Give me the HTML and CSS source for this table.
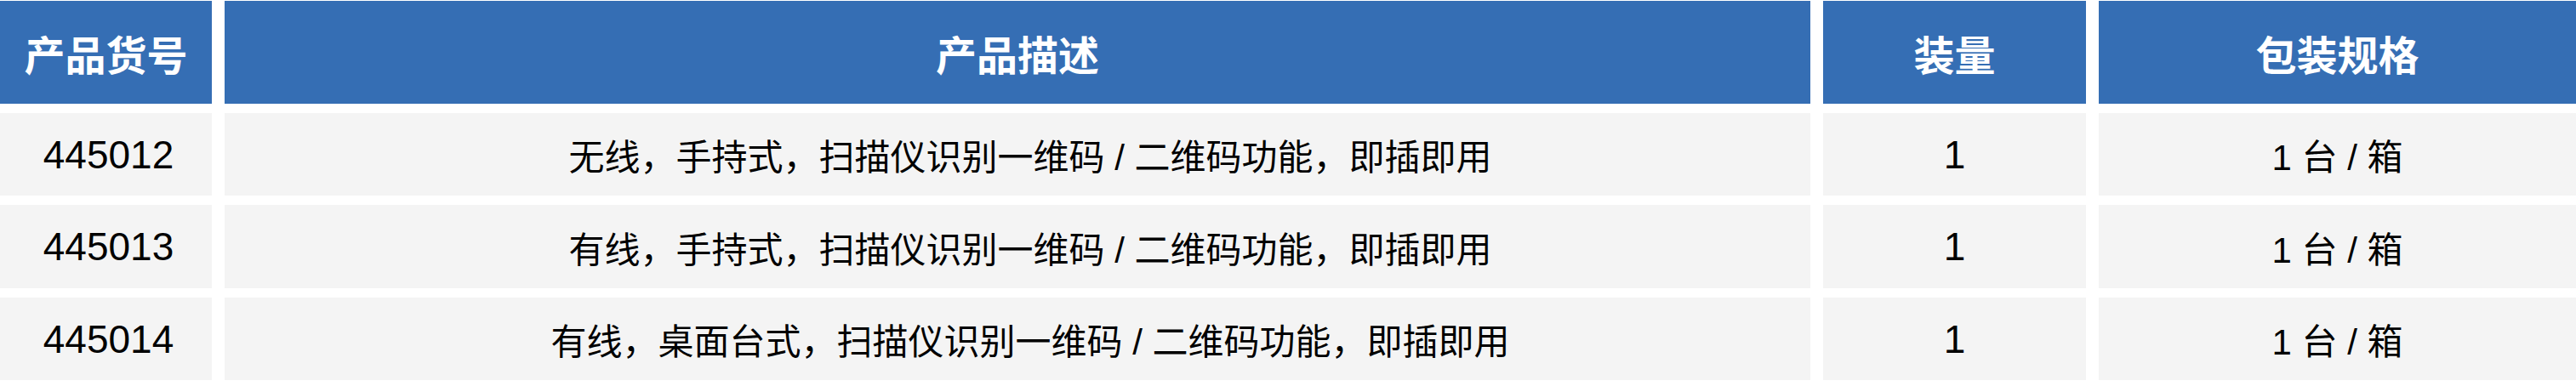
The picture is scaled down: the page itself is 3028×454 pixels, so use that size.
FILE: index.html
```html
<!DOCTYPE html>
<html lang="zh-CN">
<head>
<meta charset="utf-8">
<title>产品列表</title>
<link rel="stylesheet" href="styles.css">
</head>
<body>
<div class="table">
  <div class="cell head">产品货号</div>
  <div class="cell head">产品描述</div>
  <div class="cell head">装量</div>
  <div class="cell head">包装规格</div>

  <div class="cell code">445012</div>
  <div class="cell desc">无线，手持式，扫描仪识别一维码 / 二维码功能，即插即用</div>
  <div class="cell qty">1</div>
  <div class="cell pack">1 台 / 箱</div>

  <div class="cell code">445013</div>
  <div class="cell desc">有线，手持式，扫描仪识别一维码 / 二维码功能，即插即用</div>
  <div class="cell qty">1</div>
  <div class="cell pack">1 台 / 箱</div>

  <div class="cell code">445014</div>
  <div class="cell desc">有线，桌面台式，扫描仪识别一维码 / 二维码功能，即插即用</div>
  <div class="cell qty">1</div>
  <div class="cell pack">1 台 / 箱</div>
</div>
</body>
</html>
```

FILE: styles.css
```css
html, body {
  margin: 0;
  padding: 0;
  background: #ffffff;
}

body {
  font-family: "Liberation Sans", "Noto Sans CJK SC", sans-serif;
  color: #000000;
}

.table {
  display: grid;
  grid-template-columns: 249px 1864px 309px 1fr;
  grid-template-rows: 121px 97px 98px 97px;
  column-gap: 15px;
  row-gap: 11px;
  padding-top: 1px;
  width: 3028px;
}

.cell {
  display: flex;
  align-items: center;
  justify-content: center;
  background: #f4f4f4;
  white-space: nowrap;
}

.head {
  background: #356eb4;
  color: #ffffff;
  font-family: "Noto Sans CJK SC", sans-serif;
  font-weight: 700;
  font-size: 48px;
}

.code {
  font-size: 46px;
  padding-left: 6px;
}

.desc {
  font-size: 42px;
  padding-left: 30px;
}

.qty {
  font-size: 46px;
}

.pack {
  font-size: 42px;
}
```
